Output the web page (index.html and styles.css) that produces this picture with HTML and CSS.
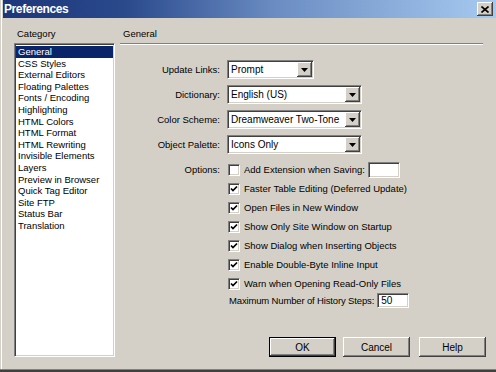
FILE: index.html
```html
<!DOCTYPE html>
<html>
<head>
<meta charset="utf-8">
<link rel="stylesheet" href="styles.css">
</head>
<body>
<div class="win">
  <div class="title">
    <span class="title-text">Preferences</span>
    <span class="close"><svg width="8" height="7" viewBox="0 0 8 7"><path d="M0.5 0.5 L7.5 6.5 M7.5 0.5 L0.5 6.5" stroke="#000" stroke-width="1.6" fill="none"/></svg></span>
  </div>
  <div class="main">
    <div class="cat">
      <div class="cat-label">Category</div>
      <ul class="list">
        <li class="sel-item">General</li>
        <li>CSS Styles</li>
        <li>External Editors</li>
        <li>Floating Palettes</li>
        <li>Fonts / Encoding</li>
        <li>Highlighting</li>
        <li>HTML Colors</li>
        <li>HTML Format</li>
        <li>HTML Rewriting</li>
        <li>Invisible Elements</li>
        <li>Layers</li>
        <li>Preview in Browser</li>
        <li>Quick Tag Editor</li>
        <li>Site FTP</li>
        <li>Status Bar</li>
        <li>Translation</li>
      </ul>
    </div>
    <div class="panel">
      <div class="panel-head">General</div>
      <div class="form">
        <div class="row srow">
          <span class="lbl">Update Links:</span>
          <div class="sel w-short"><span class="sel-text">Prompt</span><span class="arr"><svg width="7" height="4" viewBox="0 0 7 4"><polygon points="0,0 7,0 3.5,4" fill="#000"/></svg></span></div>
        </div>
        <div class="row srow">
          <span class="lbl">Dictionary:</span>
          <div class="sel w-long"><span class="sel-text">English (US)</span><span class="arr"><svg width="7" height="4" viewBox="0 0 7 4"><polygon points="0,0 7,0 3.5,4" fill="#000"/></svg></span></div>
        </div>
        <div class="row srow">
          <span class="lbl">Color Scheme:</span>
          <div class="sel w-long"><span class="sel-text">Dreamweaver Two-Tone</span><span class="arr"><svg width="7" height="4" viewBox="0 0 7 4"><polygon points="0,0 7,0 3.5,4" fill="#000"/></svg></span></div>
        </div>
        <div class="row srow">
          <span class="lbl">Object Palette:</span>
          <div class="sel w-long"><span class="sel-text">Icons Only</span><span class="arr"><svg width="7" height="4" viewBox="0 0 7 4"><polygon points="0,0 7,0 3.5,4" fill="#000"/></svg></span></div>
        </div>
        <div class="options">
          <div class="row crow">
            <span class="lbl">Options:</span>
            <span class="cb"></span>
            <span class="ctext">Add Extension when Saving:</span>
            <span class="tb"></span>
          </div>
          <div class="row crow indent">
            <span class="cb"><svg width="8" height="8" viewBox="0 0 8 8"><polyline points="1,3.5 3,5.6 7,1.5" stroke="#000" stroke-width="1.7" fill="none"/></svg></span>
            <span class="ctext">Faster Table Editing (Deferred Update)</span>
          </div>
          <div class="row crow indent">
            <span class="cb"><svg width="8" height="8" viewBox="0 0 8 8"><polyline points="1,3.5 3,5.6 7,1.5" stroke="#000" stroke-width="1.7" fill="none"/></svg></span>
            <span class="ctext">Open Files in New Window</span>
          </div>
          <div class="row crow indent">
            <span class="cb"><svg width="8" height="8" viewBox="0 0 8 8"><polyline points="1,3.5 3,5.6 7,1.5" stroke="#000" stroke-width="1.7" fill="none"/></svg></span>
            <span class="ctext">Show Only Site Window on Startup</span>
          </div>
          <div class="row crow indent">
            <span class="cb"><svg width="8" height="8" viewBox="0 0 8 8"><polyline points="1,3.5 3,5.6 7,1.5" stroke="#000" stroke-width="1.7" fill="none"/></svg></span>
            <span class="ctext">Show Dialog when Inserting Objects</span>
          </div>
          <div class="row crow indent">
            <span class="cb"><svg width="8" height="8" viewBox="0 0 8 8"><polyline points="1,3.5 3,5.6 7,1.5" stroke="#000" stroke-width="1.7" fill="none"/></svg></span>
            <span class="ctext">Enable Double-Byte Inline Input</span>
          </div>
          <div class="row crow indent">
            <span class="cb"><svg width="8" height="8" viewBox="0 0 8 8"><polyline points="1,3.5 3,5.6 7,1.5" stroke="#000" stroke-width="1.7" fill="none"/></svg></span>
            <span class="ctext">Warn when Opening Read-Only Files</span>
          </div>
          <div class="row maxrow">
            <span class="mtext">Maximum Number of History Steps:</span>
            <span class="tb tb-max">50</span>
          </div>
        </div>
      </div>
      <div class="btns">
        <span class="btn btn-default">OK</span>
        <span class="btn">Cancel</span>
        <span class="btn btn-help">Help</span>
      </div>
    </div>
  </div>
</div>
</body>
</html>
```

FILE: styles.css
```css
* { box-sizing: border-box; margin: 0; padding: 0; }
html, body { width: 496px; height: 372px; overflow: hidden; }
body {
  background: #d4d0c8;
  font-family: "Liberation Sans", Arial, sans-serif;
  font-size: 9.5px;
  color: #000;
}
.win {
  height: 372px;
  display: flex;
  flex-direction: column;
  padding-left: 3px;
  background: linear-gradient(to right, #d4d0c8 0 1px, #ffffff 1px 2px, #d4d0c8 2px);
  border-bottom: 2px solid #404040;
  box-shadow: inset 0 -1px #808080;
}
.title {
  height: 18px;
  display: flex;
  align-items: center;
  background: linear-gradient(to right, #1c367a 0%, #2a4a8c 25%, #6a8cc2 55%, #a6caf0 100%);
  color: #fff;
  font-weight: bold;
  font-size: 12px;
  padding-left: 1px;
}
.title-text { flex: 1; letter-spacing: -0.4px; }
.close {
  width: 16px;
  height: 14px;
  margin-right: 3px;
  display: flex;
  align-items: center;
  justify-content: center;
  background: #d4d0c8;
  box-shadow: inset -1px -1px #404040, inset 1px 1px #ffffff, inset -2px -2px #808080, inset 2px 2px #d4d0c8;
}
.main {
  flex: 1;
  display: flex;
  gap: 5px;
  padding: 0 0 13px 11px;
}
.cat { width: 101px; display: flex; flex-direction: column; }
.cat-label { margin-top: 10px; height: 15px; line-height: 12px; padding-left: 3px; }
.list {
  flex: 1;
  list-style: none;
  background: #fff;
  border: 1px solid;
  border-color: #808080 #ffffff #ffffff #808080;
  box-shadow: inset 1px 1px #404040, inset -1px -1px #d4d0c8;
  padding: 2px 1px 1px 1px;
}
.list li {
  height: 11.6px;
  line-height: 11.6px;
  padding-left: 2px;
  white-space: nowrap;
}
.list li.sel-item { background: #0a246a; color: #fff; }
.panel { width: 366px; display: flex; flex-direction: column; }
.panel-head {
  margin-top: 10px;
  line-height: 12px;
  padding: 0 0 3px 3px;
  margin-right: 3px;
  border-bottom: 1px solid #808080;
  box-shadow: 0 1px #ffffff;
}
.form { margin-top: 16px; }
.row { display: flex; align-items: center; white-space: nowrap; }
.lbl { width: 100px; margin-right: 7px; text-align: right; }
.srow { height: 19px; margin-bottom: 6px; }
.sel {
  height: 19px;
  display: flex;
  align-items: center;
  background: #fff;
  border: 1px solid;
  border-color: #808080 #ffffff #ffffff #808080;
  box-shadow: inset 1px 1px #404040, inset -1px -1px #d4d0c8;
  padding: 1px;
}
.w-short { width: 87px; }
.w-long { width: 135px; }
.sel-text { flex: 1; padding-left: 2px; font-size: 10px; }
.arr {
  width: 15px;
  height: 15px;
  display: flex;
  align-items: center;
  justify-content: center;
  background: #d4d0c8;
  box-shadow: inset -1px -1px #404040, inset 1px 1px #ffffff, inset -2px -2px #808080, inset 2px 2px #d4d0c8;
}
.arr svg { display: block; margin-top: 1px; }
.options { margin-top: 1px; }
.crow { height: 19px; }
.indent { padding-left: 107px; }
.cb {
  width: 12px;
  height: 12px;
  margin-left: 1px;
  margin-right: 4px;
  display: flex;
  align-items: center;
  justify-content: center;
  background: #fff;
  border: 1px solid;
  border-color: #808080 #ffffff #ffffff #808080;
  box-shadow: inset 1px 1px #404040, inset -1px -1px #d4d0c8;
}
.cb svg { display: block; }
.tb {
  width: 32px;
  height: 16px;
  margin-left: 3px;
  background: #fff;
  border: 1px solid;
  border-color: #808080 #ffffff #ffffff #808080;
  box-shadow: inset 1px 1px #404040, inset -1px -1px #d4d0c8;
  padding-left: 3px;
  line-height: 13px;
}
.maxrow { height: 15px; padding-left: 109px; }
.mtext { letter-spacing: -0.15px; }
.tb-max { height: 15px; margin-left: 3px; line-height: 13px; font-size: 10px; }
.btns {
  margin-top: auto;
  display: flex;
  justify-content: flex-end;
  gap: 7px;
}
.btn {
  width: 67px;
  height: 20px;
  display: flex;
  align-items: center;
  justify-content: center;
  background: #d4d0c8;
  font-size: 10px;
  box-shadow: inset -1px -1px #404040, inset 1px 1px #ffffff, inset -2px -2px #808080, inset 2px 2px #d4d0c8;
}
.btn-default { border: 1px solid #000; }
.btn-help { margin-left: 2px; }
```
